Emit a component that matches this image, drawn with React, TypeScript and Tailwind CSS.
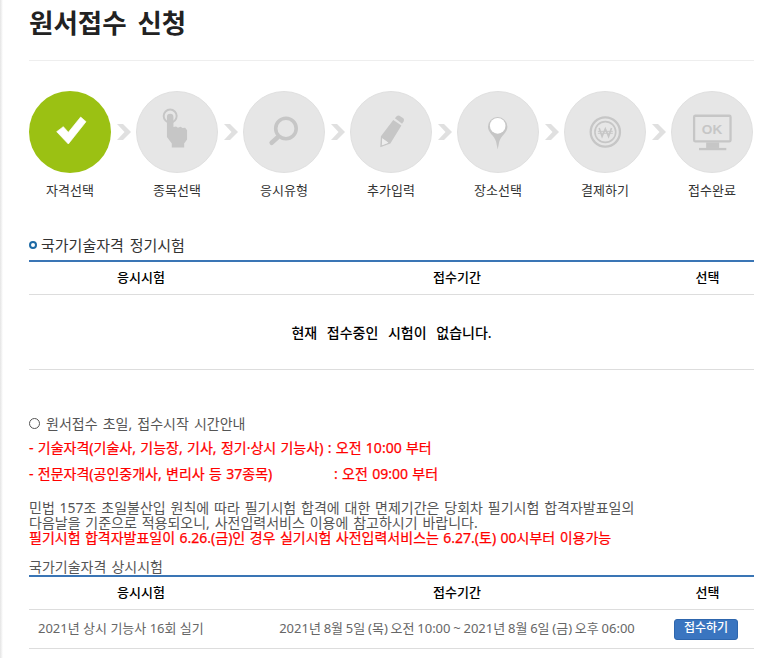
import type { ReactNode } from "react";

const FONT = "font-['Noto_Sans','Noto_Sans_CJK_KR',sans-serif]";
const GRAY = "#c6c6c6";

function Icon({ children }: { children: ReactNode }) {
  return (
    <svg width="82" height="82" viewBox="0 0 246 246">
      {children}
    </svg>
  );
}

function CheckIcon() {
  return (
    <Icon>
      <path d="M83 122 L103 107 L118 124 L155 78 L171 92 L118 159 Z" fill="#fff" stroke="#fff" strokeWidth="2" strokeLinejoin="round" />
    </Icon>
  );
}

function HandIcon() {
  return (
    <Icon>
      <circle cx="102" cy="74" r="20" fill="none" stroke={GRAY} strokeWidth="6" />
      <path d="M92 77 a10 10 0 0 1 20 0 V108 l8 -2 l6 4 l8 -3 l6 4 l8 -1 l6 8 V146 l-9 12 V171 H107 V158 L92 138 Z" fill={GRAY} />
    </Icon>
  );
}

function SearchIcon() {
  return (
    <Icon>
      <circle cx="129" cy="112" r="31.500" fill="none" stroke={GRAY} strokeWidth="11" />
      <path d="M103 140 L85 156" stroke={GRAY} strokeWidth="14" strokeLinecap="round" />
    </Icon>
  );
}

function PencilIcon() {
  return (
    <Icon>
      <path d="M135 81 L141 74 Q145 71 149 73 L161 81 Q165 85 162 90 L157 98 Z" fill={GRAY} />
      <path d="M130 86 L155 103 L121 158 L90 170 L92 136 Z M96 142 L95 164 L115 156 Z" fill={GRAY} fillRule="evenodd" />
      <path d="M96 142 L95 164 L115 156 Z" fill="#ededed" />
    </Icon>
  );
}

function PinIcon() {
  return (
    <Icon>
      <path d="M122 77 a30 30 0 0 0 -30 30 c0 18 20 28 25 45 L122 177 L127 152 c5 -17 25 -27 25 -45 A30 30 0 0 0 122 77 Z" fill={GRAY} />
      <circle cx="122" cy="104" r="24" fill="#fff" />
    </Icon>
  );
}

function WonIcon() {
  return (
    <Icon>
      <g fill="none" stroke={GRAY}>
        <circle cx="124" cy="123" r="45" strokeWidth="7" />
        <circle cx="124" cy="123" r="32" strokeWidth="5" />
        <path d="M105 111 L114 137 L124 113 L134 137 L143 111" strokeWidth="5" />
        <path d="M101 121 H147 M101 127 H147" strokeWidth="3" />
      </g>
    </Icon>
  );
}

function MonitorIcon() {
  return (
    <Icon>
      <rect x="68" y="73" width="112" height="79" rx="4" fill="none" stroke={GRAY} strokeWidth="7" />
      <rect x="105" y="155" width="40" height="17" fill={GRAY} />
      <rect x="83" y="172" width="84" height="7" fill={GRAY} />
      <text x="123" y="129" textAnchor="middle" fontSize="42" fontWeight="700" fontFamily="Liberation Sans, sans-serif" fill={GRAY}>OK</text>
    </Icon>
  );
}

function Chevron() {
  return (
    <div className="flex w-[25px] h-[82px] items-center justify-center">
      <svg width="14" height="16" viewBox="0 0 14 16" fill="#e0e0e0">
        <path d="M0 0 H6 L14 8 L6 16 H0 L7.500 8 Z" />
      </svg>
    </div>
  );
}

const steps: { label: string; icon: ReactNode; active?: boolean }[] = [
  { label: "자격선택", icon: <CheckIcon />, active: true },
  { label: "종목선택", icon: <HandIcon /> },
  { label: "응시유형", icon: <SearchIcon /> },
  { label: "추가입력", icon: <PencilIcon /> },
  { label: "장소선택", icon: <PinIcon /> },
  { label: "결제하기", icon: <WonIcon /> },
  { label: "접수완료", icon: <MonitorIcon /> },
];

function Steps() {
  return (
    <div className="flex mt-[30px]">
      {steps.map((step, i) => (
        <div key={step.label} className="flex">
          <div className="w-[82px]">
            <div
              className={
                step.active
                  ? "flex h-[82px] w-[82px] items-center justify-center rounded-full bg-[#9bc113]"
                  : "flex h-[82px] w-[82px] items-center justify-center rounded-full border border-[#e0e0e0] bg-[#e6e6e6]"
              }
            >
              {step.icon}
            </div>
            <p className="mt-[7px] text-center text-[13px] leading-[20px] text-[#333]">{step.label}</p>
          </div>
          {i < steps.length - 1 && <Chevron />}
        </div>
      ))}
    </div>
  );
}

function HeadRow() {
  return (
    <div className="grid h-[33px] grid-cols-[224px_408px_93px] items-center border-b border-[#ddd] text-center text-[13px] font-medium text-black">
      <div>응시시험</div>
      <div>접수기간</div>
      <div>선택</div>
    </div>
  );
}

export default function App() {
  return (
    <div className={`${FONT} h-[658px] w-[763px] overflow-hidden bg-white bg-gradient-to-r from-[#e4e4e4] to-white to-[3px] pl-[29px] pr-[9px]`}>
      <h1 className="h-[61px] border-b border-[#eee] pt-[3px] text-[26.500px] font-bold leading-[40px] text-[#222] [word-spacing:4px]">원서접수 신청</h1>

      <Steps />

      <div className="mt-[36px] flex h-[24px] items-center gap-[4px] pb-[6px]">
        <span className="h-[8px] w-[8px] rounded-full border-2 border-[#1d6aa5]" />
        <h2 className="text-[15px] leading-[20px] text-[#333] [word-spacing:2px]">국가기술자격 정기시험</h2>
      </div>
      <div className="h-[2px] bg-[#3a75b5]" />
      <HeadRow />
      <div className="flex h-[75px] items-center justify-center border-b border-[#ddd] text-[14px] font-medium text-black [word-spacing:6px]">
        현재 접수중인 시험이 없습니다.
      </div>

      <div className="mt-[41px] flex h-[24px] items-center gap-[6px] text-[14px] text-[#555] [word-spacing:1.500px]">
        <span className="h-[11px] w-[11px] rounded-full border border-[#555]" />
        원서접수 초일, 접수시작 시간안내
      </div>
      <p className="mt-[1px] h-[25px] text-[14px] font-normal leading-[24px] text-[#f00] [word-spacing:0.700px] [-webkit-text-stroke:0.25px_#f00]">- 기술자격(기술사, 기능장, 기사, 정기·상시 기능사) : 오전 10:00 부터</p>
      <div className="flex h-[25px] text-[14px] font-normal leading-[25px] text-[#f00] [word-spacing:0.700px] [-webkit-text-stroke:0.25px_#f00]">
        <span className="w-[305px]">- 전문자격(공인중개사, 변리사 등 37종목)</span>
        <span>: 오전 09:00 부터</span>
      </div>

      <div className="mt-[14px] text-[14px] leading-[15px] [word-spacing:1.200px]">
        <p className="text-[#555]">민법 157조 초일불산입 원칙에 따라 필기시험 합격에 대한 면제기간은 당회차 필기시험 합격자발표일의</p>
        <p className="text-[#555]">다음날을 기준으로 적용되오니, 사전입력서비스 이용에 참고하시기 바랍니다.</p>
        <p className="font-normal text-[#f00] [word-spacing:0.800px] [-webkit-text-stroke:0.25px_#f00]">필기시험 합격자발표일이 6.26.(금)인 경우 실기시험 사전입력서비스는 6.27.(토) 00시부터 이용가능</p>
      </div>

      <h2 className="mt-[13px] h-[17px] text-[14px] leading-[18px] text-[#555] [word-spacing:1.500px]">국가기술자격 상시시험</h2>
      <div className="h-[2px] bg-[#3a75b5]" />
      <HeadRow />
      <div className="grid h-[39px] grid-cols-[224px_408px_93px] items-center border-b border-[#ddd] text-[13px] text-[#666]">
        <div className="pl-[9px]">2021년 상시 기능사 16회 실기</div>
        <div className="text-center [word-spacing:-0.600px]">2021년 8월 5일 (목) 오전 10:00 ~ 2021년 8월 6일 (금) 오후 06:00</div>
        <div className="flex justify-center pr-[3px]">
          <button className="h-[21px] w-[64px] rounded-[3px] border border-[#2e66ad] bg-[#3a75c0] pb-[2px] text-[12px] font-medium leading-[16px] text-white">접수하기</button>
        </div>
      </div>
    </div>
  );
}
